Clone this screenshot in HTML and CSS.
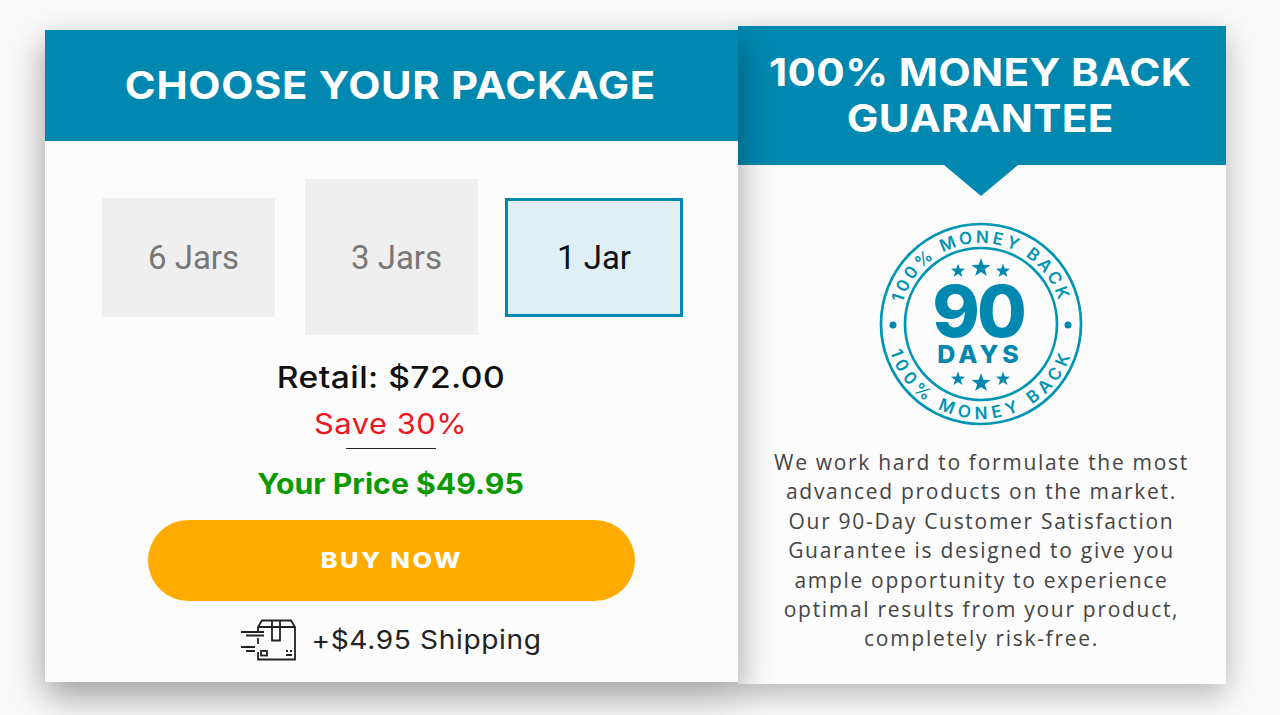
FILE: index.html
```html
<!DOCTYPE html>
<html lang="en">
<head>
<meta charset="utf-8">
<title>Choose your package</title>
<link rel="stylesheet" href="styles.css">
</head>
<body>
<main class="page">
  <section class="package">
    <h1 class="package-title"><span class="stretch">CHOOSE YOUR PACKAGE</span></h1>
    <div class="tabs">
      <div class="tab tab-six">6 Jars</div>
      <div class="tab tab-three">3 Jars</div>
      <div class="tab tab-one">1 Jar</div>
    </div>
    <p class="retail"><span class="stretch">Retail: $72.00</span></p>
    <p class="save"><span class="stretch">Save 30%</span></p>
    <div class="rule"></div>
    <p class="price"><span class="stretch">Your Price $49.95</span></p>
    <a class="buy" href="#"><span class="stretch">BUY NOW</span></a>
    <div class="shipping">
      <svg class="box" viewBox="0 0 56 42" width="56" height="42" fill="none" stroke="#222" stroke-width="1.8">
        <path d="M18 14 V8 L22 1.500 H51 L55 8 V40.500 H18 V33 M18 19 V25"/>
        <path d="M18 8 H55"/>
        <path d="M32 1.500 V21.500 H40 V1.500"/>
        <path d="M1 13 H24 M6 16.500 H24 M1 28 H15 M6 32 H15"/>
        <rect x="21" y="32" width="6" height="4.500"/>
        <path d="M46 32 H48 M50 32 H52 M46 36 H52"/>
      </svg>
      <span class="stretch">+$4.95 Shipping</span>
    </div>
  </section>
  <section class="guarantee">
    <header class="guarantee-head">
      <h2 class="guarantee-title"><span class="stretch">100% MONEY BACK<br>GUARANTEE</span></h2>
    </header>
    <svg class="badge" viewBox="0 0 204 204" width="204" height="204">
      <defs>
        <path id="arcTop" d="M21 102 a81 81 0 0 1 162 0"/>
        <path id="arcBottom" d="M7 102 a95 95 0 0 0 190 0"/>
        <polygon id="star" points="0,-1 .235,-.324 .951,-.309 .38,.124 .588,.809 0,.4 -.588,.809 -.38,.124 -.951,-.309 -.235,-.324"/>
      </defs>
      <circle class="ring" cx="102" cy="102" r="100"/>
      <circle class="ring" cx="102" cy="102" r="76"/>
      <circle class="dot" cx="14" cy="103" r="3.500"/>
      <circle class="dot" cx="189" cy="103" r="3.500"/>
      <text class="arc arc-top"><textPath href="#arcTop" startOffset="50%" text-anchor="middle">100% MONEY BACK</textPath></text>
      <text class="arc arc-bottom"><textPath href="#arcBottom" startOffset="50%" text-anchor="middle">100% MONEY BACK</textPath></text>
      <use class="dot" href="#star" transform="translate(79 49) scale(7.500)"/>
      <use class="dot" href="#star" transform="translate(102 46) scale(10)"/>
      <use class="dot" href="#star" transform="translate(124 49) scale(7.500)"/>
      <text class="ninety" x="99" y="115">90</text>
      <text class="days" x="101" y="141">DAYS</text>
      <use class="dot" href="#star" transform="translate(79 157) scale(7.500)"/>
      <use class="dot" href="#star" transform="translate(102 161) scale(10)"/>
      <use class="dot" href="#star" transform="translate(124 157) scale(7.500)"/>
    </svg>
    <p class="guarantee-copy">We work hard to formulate the most<br>advanced products on the market.<br>Our 90-Day Customer Satisfaction<br>Guarantee is designed to give you<br>ample opportunity to experience<br>optimal results from your product,<br>completely risk-free.</p>
  </section>
</main>
</body>
</html>
```
FILE: styles.css
```css
* { box-sizing: border-box; }
html, body { margin: 0; height: 715px; overflow: hidden; background: #fafafa; }
p, h1, h2 { margin: 0; }
.page {
  display: flex;
  align-items: flex-start;
  padding: 26px 0 0 45px;
  height: 715px;
  font-family: Inter, "Liberation Sans", sans-serif;
}
.stretch { display: inline-block; }
.package {
  position: relative;
  z-index: 2;
  width: 693px;
  height: 652px;
  margin-top: 4px;
  background: #fcfcfc;
  box-shadow: 0 14px 34px rgba(0, 0, 0, .38);
  text-align: center;
}
.package-title {
  height: 111px;
  padding-right: 2px;
  background: #0088b0;
  color: #fff;
  font-size: 38px;
  line-height: 110px;
  font-weight: 700;
  letter-spacing: .6px;
}
.package-title .stretch { transform: scaleX(1.1); }
.tabs {
  display: flex;
  align-items: center;
  padding: 38px 0 0 57px;
  font-family: Roboto, sans-serif;
  font-size: 33px;
}
.tab {
  display: flex;
  align-items: center;
  justify-content: center;
  width: 173px;
  height: 119px;
  background: #efefef;
  color: #777;
  padding-left: 10px;
}
.tab-three { height: 156px; margin: 0 27px 0 30px; }
.tab-one {
  width: 178px;
  padding-left: 0;
  background: #def0f4;
  color: #111;
  border: 3px solid #0088b0;
}
.retail {
  margin-top: 24px;
  color: #111;
  font-size: 30px;
  line-height: 36px;
  font-weight: 500;
  letter-spacing: .4px;
  padding-right: 1px;
}
.retail .stretch { transform: scaleX(1.12); }
.save {
  margin-top: 11px;
  color: #f0141e;
  font-size: 28px;
  line-height: 36px;
  letter-spacing: .5px;
  padding-right: 2px;
}
.save .stretch { transform: scaleX(1.1); }
.rule {
  width: 90px;
  height: 1px;
  margin: 6px 0 0 301px;
  background: #222;
}
.price {
  margin-top: 17px;
  color: #0a9a00;
  font-size: 28px;
  line-height: 36px;
  font-weight: 700;
  padding-right: 3px;
}
.price .stretch { transform: scaleX(1.08); }
.buy {
  display: block;
  width: 487px;
  height: 81px;
  margin: 18px 0 0 103px;
  border-radius: 41px;
  background: #ffab00;
  color: #fff;
  font-size: 22px;
  line-height: 81px;
  font-weight: 800;
  letter-spacing: 2.200px;
  text-decoration: none;
}
.buy .stretch { transform: scaleX(1.15); }
.shipping {
  display: flex;
  align-items: center;
  justify-content: center;
  gap: 24.500px;
  margin-top: 18px;
  padding-right: 9.500px;
  color: #222;
  font-size: 26px;
  line-height: 42px;
  letter-spacing: .6px;
}
.shipping .stretch { transform: scaleX(1.08); }
.guarantee {
  position: relative;
  z-index: 1;
  width: 488px;
  height: 658px;
  background: #fcfcfc;
  box-shadow: 0 10px 30px rgba(0, 0, 0, .28);
  text-align: center;
}
.guarantee-head {
  position: relative;
  height: 139px;
  padding-top: 23px;
  background: #0088b0;
}
.guarantee-head::after {
  content: "";
  position: absolute;
  left: 206px;
  top: 139px;
  border-style: solid;
  border-width: 31px 37px 0;
  border-color: #0088b0 transparent transparent;
}
.guarantee-title {
  color: #fff;
  font-size: 38px;
  line-height: 46px;
  font-weight: 700;
  letter-spacing: .3px;
  padding-right: 3px;
}
.guarantee-title .stretch { transform: scaleX(1.11); }
.badge { display: block; margin: 57px 0 0 141px; }
.ring { fill: none; stroke: #0095b3; stroke-width: 2.700; }
.dot { fill: #0088b0; }
.arc {
  fill: #0095b3;
  font-size: 17px;
  font-weight: 600;
}
.arc-top { letter-spacing: 3px; }
.arc-bottom { letter-spacing: 5px; }
.ninety {
  fill: #0088b0;
  font-size: 72px;
  font-weight: 800;
  letter-spacing: -3px;
  text-anchor: middle;
}
.days {
  fill: #0088b0;
  font-size: 25px;
  font-weight: 800;
  letter-spacing: 4px;
  text-anchor: middle;
}
.guarantee-copy {
  margin-top: 22px;
  color: #444;
  font-family: "Open Sans", sans-serif;
  font-size: 21px;
  line-height: 29.400px;
  letter-spacing: 1.700px;
  padding-right: 1px;
}
```
